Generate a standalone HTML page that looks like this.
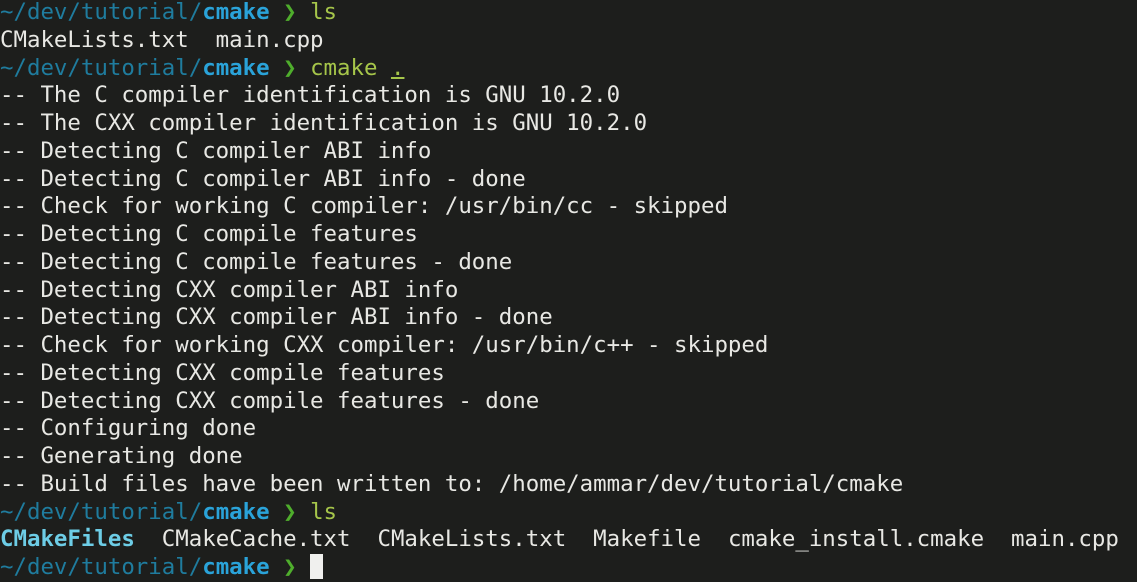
<html><head><style>
body{margin:0;background:#1d1e1c;width:1137px;height:582px;overflow:hidden}
pre{margin:0;position:absolute;top:-1px;left:0;font-family:"DejaVu Sans Mono","Liberation Mono",monospace;font-size:22.4px;line-height:27.75px;color:#e8e8e4}
.p{color:#1f7c9e}.d{color:#2aa3d9;font-weight:bold}.a{color:#4fae2c;font-weight:bold}.c{color:#a6c64a}.f{color:#6dcde6;font-weight:bold}
.cur{display:inline-block;width:13px;height:25px;background:#f0f0ee;vertical-align:-5px}
</style></head><body><pre><span class="p">~/dev/tutorial/</span><span class="d">cmake</span> <span class="a">❯</span> <span class="c">ls</span>
CMakeLists.txt  main.cpp
<span class="p">~/dev/tutorial/</span><span class="d">cmake</span> <span class="a">❯</span> <span class="c">cmake <u>.</u></span>
-- The C compiler identification is GNU 10.2.0
-- The CXX compiler identification is GNU 10.2.0
-- Detecting C compiler ABI info
-- Detecting C compiler ABI info - done
-- Check for working C compiler: /usr/bin/cc - skipped
-- Detecting C compile features
-- Detecting C compile features - done
-- Detecting CXX compiler ABI info
-- Detecting CXX compiler ABI info - done
-- Check for working CXX compiler: /usr/bin/c++ - skipped
-- Detecting CXX compile features
-- Detecting CXX compile features - done
-- Configuring done
-- Generating done
-- Build files have been written to: /home/ammar/dev/tutorial/cmake
<span class="p">~/dev/tutorial/</span><span class="d">cmake</span> <span class="a">❯</span> <span class="c">ls</span>
<span class="f">CMakeFiles</span>  CMakeCache.txt  CMakeLists.txt  Makefile  cmake_install.cmake  main.cpp
<span class="p">~/dev/tutorial/</span><span class="d">cmake</span> <span class="a">❯</span> <span class="cur"></span></pre></body></html>
